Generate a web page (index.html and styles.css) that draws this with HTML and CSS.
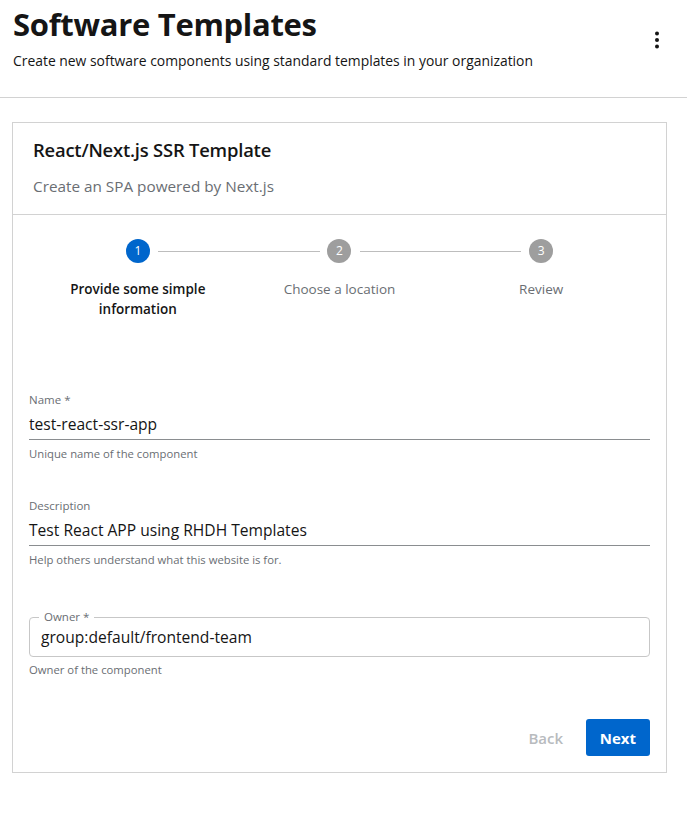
FILE: index.html
```html
<!DOCTYPE html>
<html lang="en">
<head>
<meta charset="utf-8">
<title>Software Templates</title>
<link rel="stylesheet" href="styles.css">
</head>
<body>
<header class="page-header">
  <div class="titles">
    <h1 class="page-title">Software Templates</h1>
    <p class="page-subtitle">Create new software components using standard templates in your organization</p>
  </div>
  <button class="kebab" type="button" aria-label="More">
    <svg width="24" height="24" viewBox="0 0 24 24"><circle cx="12" cy="5.5" r="2"/><circle cx="12" cy="12" r="2"/><circle cx="12" cy="18.5" r="2"/></svg>
  </button>
</header>
<main class="content">
  <section class="card">
    <div class="card-head">
      <h2 class="card-title">React/Next.js SSR Template</h2>
      <p class="card-subtitle">Create an SPA powered by Next.js</p>
    </div>
    <div class="card-body">
      <ol class="stepper">
        <li class="step active"><span class="circle">1</span><span class="step-label">Provide some simple information</span></li>
        <li class="step"><span class="connector"></span><span class="circle">2</span><span class="step-label">Choose a location</span></li>
        <li class="step"><span class="connector"></span><span class="circle">3</span><span class="step-label">Review</span></li>
      </ol>
      <form class="form">
        <div class="field std first">
          <label class="field-label">Name *</label>
          <div class="field-input">test-react-ssr-app</div>
          <div class="helper">Unique name of the component</div>
        </div>
        <div class="field std">
          <label class="field-label">Description</label>
          <div class="field-input">Test React APP using RHDH Templates</div>
          <div class="helper">Help others understand what this website is for.</div>
        </div>
        <div class="field outlined">
          <div class="outline-box">
            <label class="outline-label">Owner *</label>
            <div class="outline-input">group:default/frontend-team</div>
          </div>
          <div class="helper">Owner of the component</div>
        </div>
        <div class="actions">
          <button type="button" class="btn back" disabled>Back</button>
          <button type="button" class="btn next">Next</button>
        </div>
      </form>
    </div>
  </section>
</main>
</body>
</html>
```

FILE: styles.css
```css
* { box-sizing: border-box; }
html, body { margin: 0; padding: 0; background: #fff; }
body {
  font-family: "Open Sans", "Noto Sans", "Liberation Sans", sans-serif;
  color: #151515;
}
.page-header {
  height: 98px;
  border-bottom: 1px solid #d2d2d2;
  display: flex;
  justify-content: space-between;
  align-items: flex-start;
  padding: 5px 6px 0 13px;
}
.page-title {
  margin: 0;
  font-size: 31px;
  line-height: 38px;
  font-weight: 700;
  letter-spacing: -0.3px;
}
.page-subtitle {
  margin: 8px 0 0;
  font-size: 13.9px;
  line-height: 20px;
  font-weight: 500;
}
.kebab {
  width: 48px; height: 48px;
  margin-top: 11px;
  border: 0; background: transparent; padding: 0;
  display: flex; align-items: center; justify-content: center;
  fill: #151515;
}
.content { padding: 24px 20px 24px 12px; }
.card { border: 1px solid #d2d2d2; background: #fff; }
.card-head {
  padding: 15px 20px 16px;
  border-bottom: 1px solid #d2d2d2;
}
.card-title {
  margin: 0;
  font-size: 18.4px;
  line-height: 24px;
  font-weight: 600;
  letter-spacing: -0.2px;
}
.card-subtitle {
  margin: 12px 0 0;
  font-size: 15.3px;
  line-height: 24px;
  color: #6a6e73;
}
.card-body { padding: 0 16px 16px; }
.stepper {
  list-style: none;
  margin: 0;
  padding: 24px 8px;
  display: grid;
  grid-template-columns: repeat(3, 1fr);
}
.step {
  position: relative;
  display: flex;
  flex-direction: column;
  align-items: center;
  padding: 0 8px;
}
.connector {
  position: absolute;
  top: 12px;
  left: calc(-50% + 20px);
  right: calc(50% + 20px);
  border-top: 1px solid #bdbdbd;
}
.circle {
  width: 24px; height: 24px;
  border-radius: 50%;
  background: #9e9e9e;
  color: #fff;
  font-size: 12px;
  line-height: 24px;
  text-align: center;
}
.step.active .circle { background: #0066cc; }
.step-label {
  margin-top: 16px;
  font-size: 13.5px;
  line-height: 20px;
  text-align: center;
  color: #6a6e73;
}
.step.active .step-label { color: #151515; font-weight: 600; }
.form { display: flex; flex-direction: column; }
.field { display: flex; flex-direction: column; }
.field.first { margin-top: 49px; }
.field.std + .field.std { margin-top: 36px; }
.field-label {
  font-size: 11.5px;
  line-height: 16px;
  color: #6a6e73;
}
.field-input {
  padding: 4px 0 3px;
  font-size: 15.6px;
  line-height: 24px;
  border-bottom: 1px solid #8a8d90;
}
.helper {
  margin-top: 6px;
  font-size: 11.3px;
  line-height: 16px;
  color: #6a6e73;
}
.field.outlined { margin-top: 49px; }
.outline-box {
  position: relative;
  border: 1px solid #c7c7c7;
  border-radius: 4px;
  padding: 7px 11px;
}
.outline-label {
  position: absolute;
  top: -9px;
  left: 9px;
  padding: 0 5px;
  background: #fff;
  font-size: 11.5px;
  line-height: 16px;
  color: #6a6e73;
}
.outline-input { font-size: 15.6px; line-height: 24px; }
.field.outlined .helper { margin-top: 5px; }
.actions {
  margin-top: 41px;
  display: flex;
  justify-content: flex-end;
  gap: 8px;
}
.btn {
  font-family: inherit;
  height: 37px;
  min-width: 64px;
  padding: 0 14px;
  border: 0;
  border-radius: 3px;
  font-size: 15px;
  font-weight: 600;
}
.btn.back { background: transparent; color: #b8bbbe; }
.btn.next { background: #0066cc; color: #fff; font-weight: 700; }
```
